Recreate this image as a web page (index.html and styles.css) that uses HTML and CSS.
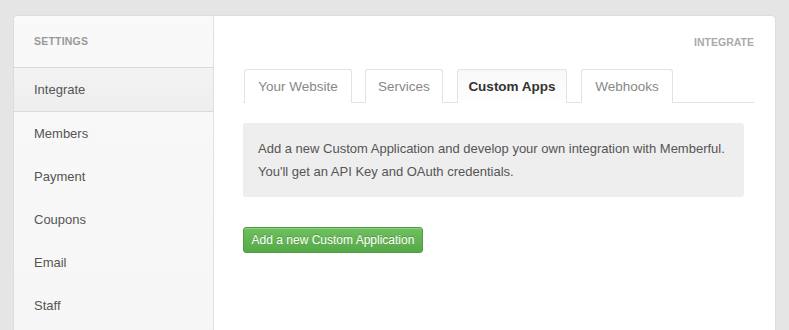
FILE: index.html
```html
<!DOCTYPE html>
<html>
<head>
<meta charset="utf-8">
<link rel="stylesheet" href="styles.css">
</head>
<body>
<div class="card">
  <aside class="sidebar">
    <div class="side-head">SETTINGS</div>
    <ul class="nav">
      <li class="nav-item active">Integrate</li>
      <li class="nav-item">Members</li>
      <li class="nav-item">Payment</li>
      <li class="nav-item">Coupons</li>
      <li class="nav-item">Email</li>
      <li class="nav-item">Staff</li>
    </ul>
  </aside>
  <main class="main">
    <div class="crumb">INTEGRATE</div>
    <div class="tabs">
      <div class="tab tab-website">Your Website</div>
      <div class="tab tab-services">Services</div>
      <div class="tab tab-active tab-apps">Custom Apps</div>
      <div class="tab tab-hooks">Webhooks</div>
    </div>
    <div class="info">Add a new Custom Application and develop your own integration with Memberful.<br>You'll get an API Key and OAuth credentials.</div>
    <button class="btn">Add a new Custom Application</button>
  </main>
</div>
</body>
</html>
```
FILE: styles.css
```css
html, body { margin: 0; padding: 0; }
body {
  background: #e5e5e5;
  font-family: "Liberation Sans", Arial, sans-serif;
  color: #555;
  height: 330px;
  overflow: hidden;
}
.card {
  margin: 16px 14px 0 14px;
  width: 761px;
  height: 330px;
  background: #fff;
  border-radius: 4px 4px 0 0;
  box-shadow: 0 0 2px rgba(0,0,0,0.12);
  display: flex;
  overflow: hidden;
}
.sidebar {
  width: 199px;
  flex: none;
  background: linear-gradient(to bottom, #f9f9f9, #f6f6f6);
  border-right: 1px solid #e0e0e0;
}
.side-head {
  height: 52px;
  box-sizing: border-box;
  padding: 19px 0 0 20px;
  font-size: 10.5px;
  font-weight: bold;
  color: #999;
  letter-spacing: 0.2px;
  border-bottom: 1px solid #d9d9d9;
}
.nav { list-style: none; margin: 0; padding: 0; }
.nav-item {
  height: 43px;
  line-height: 43px;
  padding-left: 20px;
  font-size: 13px;
  color: #555;
}
.nav-item.active {
  background: linear-gradient(to bottom, #f3f3f3, #eeeeee);
  border-bottom: 1px solid #d9d9d9;
}
.main {
  flex: 1;
  padding: 0 21px 0 29px;
}
.crumb {
  text-align: right;
  font-size: 10.5px;
  font-weight: bold;
  color: #aaa;
  padding-top: 20px;
  height: 53px;
  box-sizing: border-box;
}
.tabs {
  display: flex;
  gap: 13px;
  border-bottom: 1px solid #e3e3e3;
  height: 33px;
  padding-left: 1px;
}
.tab {
  box-sizing: border-box;
  height: 34px;
  line-height: 33px;
  text-align: center;
  border: 1px solid #e3e3e3;
  border-bottom: none;
  border-radius: 3px 3px 0 0;
  font-size: 13.5px;
  color: #888;
  background: #fff;
}
.tab-website { width: 108px; }
.tab-services { width: 78px; margin-right: 1px; }
.tab-apps { width: 110px; margin-right: 1px; }
.tab-hooks { width: 92px; }
.tab-active {
  background: linear-gradient(to bottom, #f8f8f8, #fff);
  color: #333;
  font-weight: bold;
}
.info {
  margin-top: 20px;
  margin-right: 10px;
  height: 74px;
  box-sizing: border-box;
  background: #eeeeee;
  border-radius: 3px;
  padding: 14px 15px;
  font-size: 13px;
  line-height: 23px;
  color: #555;
}
.btn {
  margin-top: 30px;
  display: block;
  width: 180px;
  height: 26px;
  padding: 0;
  border: 1px solid #4e9d41;
  border-radius: 3px;
  background: linear-gradient(to bottom, #6fc05f, #56a948);
  color: #fff;
  font-family: "Liberation Sans", Arial, sans-serif;
  font-size: 12px;
  text-shadow: 0 -1px 0 rgba(0,0,0,0.2);
  box-shadow: inset 0 1px 0 rgba(255,255,255,0.25);
}
```
